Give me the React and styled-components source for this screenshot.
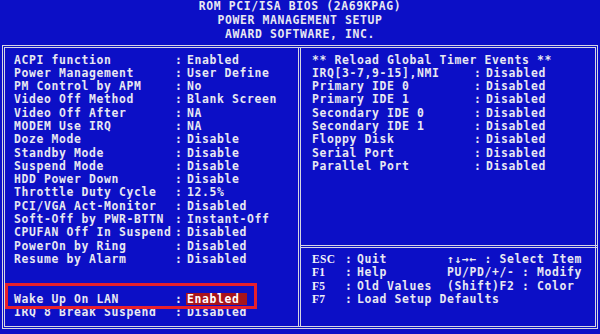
import React from "react";
import styled, { createGlobalStyle } from "styled-components";

const Global = createGlobalStyle`
  html, body { margin: 0; padding: 0; background: #0c0fc6; }
  body { width: 600px; height: 334px; overflow: hidden; }
`;

const Screen = styled.div`
  width: 600px;
  height: 334px;
  background: #0c0fc6;
  color: #e8e8f2;
  font-family: "DejaVu Sans Mono", "Liberation Mono", monospace;
  font-weight: bold;
  font-size: 11.4px;
  letter-spacing: 0.64px;
  display: flex;
  flex-direction: column;
`;

const Header = styled.header`
  height: 45px;
  box-sizing: border-box;
  margin-top: -1px;
  display: flex;
  flex-direction: column;
  align-items: center;
  line-height: 14px;
  white-space: pre;
`;

const Frame = styled.main`
  margin: 1px 2px 0;
  height: 284px;
  box-sizing: border-box;
  border: 3px double #d6d6e2;
  display: grid;
  grid-template-columns: 296px 296px;
`;

const LeftPanel = styled.section`
  position: relative;
  padding: 5.5px 0 0 9px;
  border-right: 3px double #d6d6e2;
`;

const RightPanel = styled.section`
  display: grid;
  grid-template-rows: 200px 1fr;
`;

const TimerBox = styled.div`
  padding: 5.5px 0 0 11px;
  border-bottom: 3px double #d6d6e2;
`;

const HelpBox = styled.div`
  padding: 5px 0 0 11px;
`;

const Row = styled.div`
  display: grid;
  grid-template-columns: ${(p) => p.$label}px 12px auto;
  height: 13.3px;
  line-height: 13.3px;
  white-space: pre;
`;

const Value = styled.span`
  justify-self: start;
  ${(p) =>
    p.$selected &&
    `
    background: #a8141c;
    color: #ffffff;
    padding: 0 8px 0 1px;
    margin-left: -1px;
    line-height: 12px;
    height: 12px;
    margin-top: 0.3px;
  `}
`;

const Heading = styled.div`
  height: 13.3px;
  line-height: 13.3px;
  white-space: pre;
`;

const HelpRow = styled.div`
  display: grid;
  grid-template-columns: 33px 12px 90px auto;
  height: 13.3px;
  line-height: 13.3px;
  white-space: pre;
`;

const Key = styled.span`
  font-family: "Liberation Serif", serif;
  font-weight: bold;
  font-size: 11.5px;
  letter-spacing: 0.3px;
  color: #f2f2fa;
`;

const Wide = styled.span`
  grid-column: 3 / span 2;
`;

const Callout = styled.div`
  position: absolute;
  left: 0;
  top: 235px;
  width: 252px;
  height: 26px;
  box-sizing: border-box;
  border: 3.5px solid #e6202c;
  pointer-events: none;
`;

const leftRows = [
  ["ACPI function", "Enabled"],
  ["Power Management", "User Define"],
  ["PM Control by APM", "No"],
  ["Video Off Method", "Blank Screen"],
  ["Video Off After", "NA"],
  ["MODEM Use IRQ", "NA"],
  ["Doze Mode", "Disable"],
  ["Standby Mode", "Disable"],
  ["Suspend Mode", "Disable"],
  ["HDD Power Down", "Disable"],
  ["Throttle Duty Cycle", "12.5%"],
  ["PCI/VGA Act-Monitor", "Disabled"],
  ["Soft-Off by PWR-BTTN", "Instant-Off"],
  ["CPUFAN Off In Suspend", "Disabled"],
  ["PowerOn by Ring", "Disabled"],
  ["Resume by Alarm", "Disabled"],
  null,
  null,
  ["Wake Up On LAN", "Enabled", true],
  ["IRQ 8 Break Suspend", "Disabled"],
];

const rightRows = [
  ["IRQ[3-7,9-15],NMI", "Disabled"],
  ["Primary IDE 0", "Disabled"],
  ["Primary IDE 1", "Disabled"],
  ["Secondary IDE 0", "Disabled"],
  ["Secondary IDE 1", "Disabled"],
  ["Floppy Disk", "Disabled"],
  ["Serial Port", "Disabled"],
  ["Parallel Port", "Disabled"],
];

const help = [
  ["ESC", "Quit", "\u2191\u2193\u2192\u2190 : Select Item"],
  ["F1", "Help", "PU/PD/+/- : Modify"],
  ["F5", "Old Values", "(Shift)F2 : Color"],
];

export default function App() {
  return (
    <Screen>
      <Global />
      <Header>
        <div>ROM PCI/ISA BIOS (2A69KPAG)</div>
        <div>POWER MANAGEMENT SETUP</div>
        <div>AWARD SOFTWARE, INC.</div>
      </Header>
      <Frame>
        <LeftPanel>
          {leftRows.map((r, i) =>
            r ? (
              <Row key={i} $label={161}>
                <span>{r[0]}</span>
                <span>:</span>
                <Value $selected={r[2]}>{r[1]}</Value>
              </Row>
            ) : (
              <Row key={i} $label={161} />
            )
          )}
          <Callout />
        </LeftPanel>
        <RightPanel>
          <TimerBox>
            <Heading>** Reload Global Timer Events **</Heading>
            {rightRows.map((r, i) => (
              <Row key={i} $label={162}>
                <span>{r[0]}</span>
                <span>:</span>
                <Value>{r[1]}</Value>
              </Row>
            ))}
          </TimerBox>
          <HelpBox>
            {help.map((h) => (
              <HelpRow key={h[0]}>
                <Key>{h[0]}</Key>
                <span>:</span>
                <span>{h[1]}</span>
                <span>{h[2]}</span>
              </HelpRow>
            ))}
            <HelpRow>
              <Key>F7</Key>
              <span>:</span>
              <Wide>Load Setup Defaults</Wide>
            </HelpRow>
          </HelpBox>
        </RightPanel>
      </Frame>
    </Screen>
  );
}
